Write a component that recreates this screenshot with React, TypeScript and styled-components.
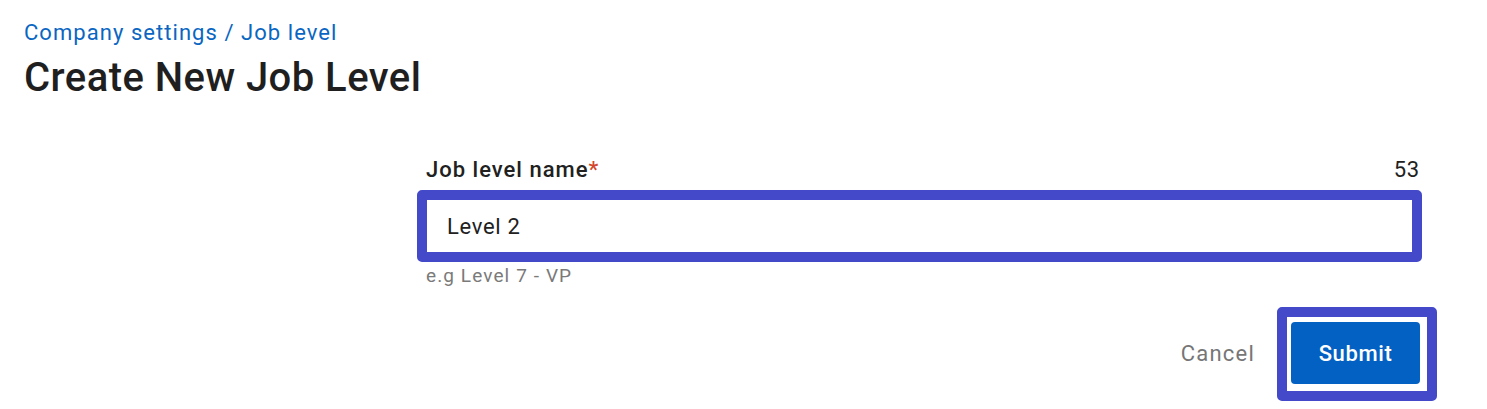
import React from "react";
import styled, { createGlobalStyle } from "styled-components";

const Global = createGlobalStyle`
  html, body { margin: 0; padding: 0; background: #ffffff; }
  body { font-family: Roboto, "Liberation Sans", sans-serif; color: #212121; min-height: 409px; }
  * { box-sizing: border-box; }
`;

const Page = styled.div`
  padding: 20px 24px 40px 24px;
  display: flex;
  flex-direction: column;
`;

const Breadcrumb = styled.nav`
  font-size: 22px;
  line-height: 26px;
  color: #0a66c2;
  letter-spacing: 1.05px;
`;

const Title = styled.h1`
  margin: 10px 0 0 0;
  font-size: 40px;
  line-height: 44px;
  font-weight: 500;
  letter-spacing: 0.45px;
  color: #1f1f1f;
`;

const Form = styled.form`
  margin: 57px 0 0 402px;
  width: 994px;
  display: flex;
  flex-direction: column;
`;

const LabelRow = styled.div`
  display: flex;
  justify-content: space-between;
  align-items: baseline;
  font-size: 22px;
  line-height: 26px;
`;

const Label = styled.label`
  font-weight: 500;
  color: #212121;
  letter-spacing: 1px;
`;

const Required = styled.span`
  color: #d3462c;
`;

const Count = styled.span`
  color: #212121;
  font-size: 22px;
  letter-spacing: 0.8px;
`;

const InputHighlight = styled.div`
  display: flex;
  margin: 7px -2px 0 -9px;
  border: 10px solid #4349c9;
  border-radius: 5px;
`;

const Input = styled.input`
  flex: 1;
  min-width: 0;
  height: 52px;
  border: none;
  outline: none;
  padding: 0 20px;
  font-family: Roboto, "Liberation Sans", sans-serif;
  font-size: 22px;
  letter-spacing: 0.7px;
  color: #212121;
  background: #fff;
`;

const Helper = styled.div`
  margin-top: 3px;
  font-size: 19px;
  line-height: 22px;
  letter-spacing: 1.1px;
  color: #7a7a7a;
`;

const Actions = styled.div`
  margin-top: 35px;
  display: flex;
  justify-content: flex-end;
  align-items: center;
  gap: 20px;
`;

const CancelButton = styled.button`
  background: none;
  border: none;
  padding: 0 16px;
  font-family: Roboto, "Liberation Sans", sans-serif;
  font-size: 22px;
  letter-spacing: 1.2px;
  color: #767676;
  cursor: pointer;
`;

const Highlight = styled.div`
  display: flex;
  margin: -15px -17px -17px -14px;
  padding: 5px 7px 7px 4px;
  border: 10px solid #4349c9;
  border-radius: 5px;
`;

const SubmitButton = styled.button`
  width: 129px;
  height: 62px;
  border: none;
  border-radius: 4px;
  background: #0361c4;
  color: #ffffff;
  font-family: Roboto, "Liberation Sans", sans-serif;
  font-size: 22px;
  font-weight: 500;
  letter-spacing: 0.6px;
  cursor: pointer;
`;

export default function App() {
  return (
    <>
      <Global />
      <Page>
        <Breadcrumb>Company settings / Job level</Breadcrumb>
        <Title>Create New Job Level</Title>
        <Form onSubmit={(e) => e.preventDefault()}>
          <LabelRow>
            <Label>
              Job level name<Required>*</Required>
            </Label>
            <Count>53</Count>
          </LabelRow>
          <InputHighlight>
            <Input defaultValue="Level 2" />
          </InputHighlight>
          <Helper>e.g Level 7 - VP</Helper>
          <Actions>
            <CancelButton type="button">Cancel</CancelButton>
            <Highlight>
              <SubmitButton type="submit">Submit</SubmitButton>
            </Highlight>
          </Actions>
        </Form>
      </Page>
    </>
  );
}
